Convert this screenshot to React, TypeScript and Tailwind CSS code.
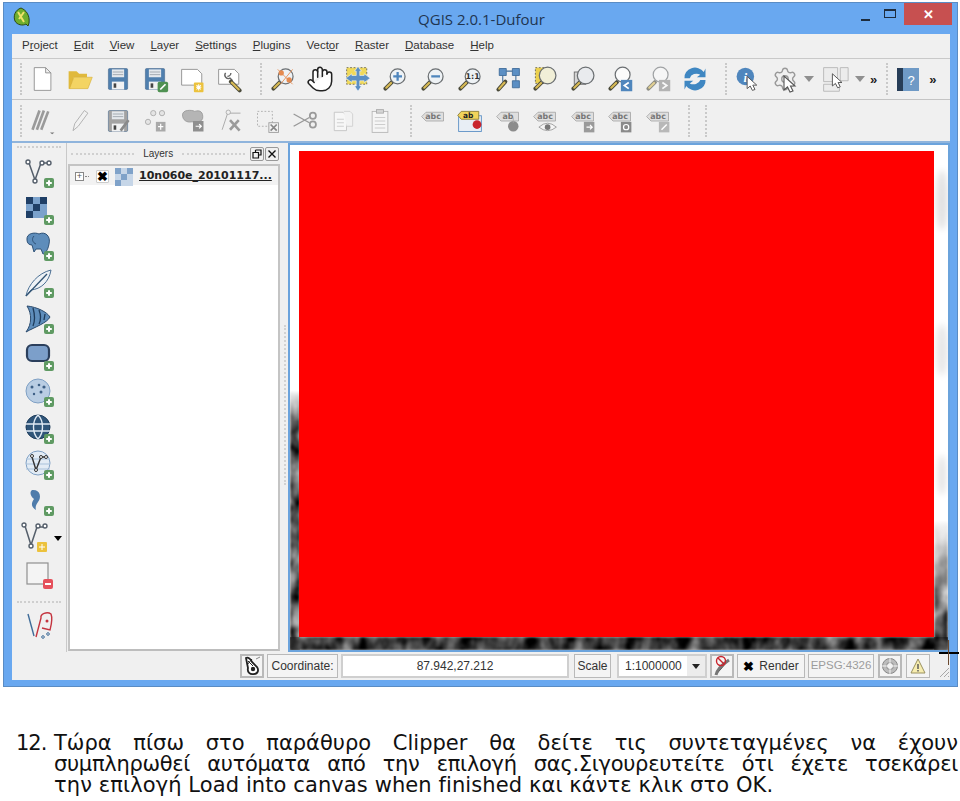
import React from 'react';
import { Hand, Settings } from 'lucide-react';

const Svg: React.FC<{ children: React.ReactNode; size?: number }> = ({ children, size = 32 }) => (
  <svg width={size} height={size} viewBox="0 0 32 32" fill="none">{children}</svg>
);

// little pieces shared by the toolbar icons
const Lens = ({ fill = '#eef2f5', cx = 19, cy = 13, r = 8.5 }: { fill?: string; cx?: number; cy?: number; r?: number }) => (
  <>
    <path d="M12.5 19.5 L5 27" stroke="#4a4a3a" strokeWidth="4.5" strokeLinecap="round" />
    <path d="M11.5 20.5 L6 26" stroke="#d9bb55" strokeWidth="2.4" strokeLinecap="round" />
    <circle cx={cx} cy={cy} r={r} fill={fill} stroke="#6b6f72" strokeWidth="1.4" />
  </>
);

const Cursor = ({ x = 0, y = 0 }: { x?: number; y?: number }) => (
  <path transform={`translate(${x} ${y})`} d="M0 0 L0 14 L3.5 11 L6 16 L9 15 L6.5 10 L11 10 Z" fill="#fff" stroke="#555" strokeWidth="1.1" />
);

const Plus = ({ x = 21, y = 21 }: { x?: number; y?: number }) => (
  <>
    <rect x={x} y={y} width="10" height="10" rx="2" fill="#5f9a63" />
    <path d={`M${x + 5} ${y + 2.2} V${y + 7.8} M${x + 2.2} ${y + 5} H${x + 7.8}`} stroke="#fff" strokeWidth="2" />
  </>
);

const Floppy = ({ color = '#4f7fae' }: { color?: string }) => (
  <>
    <rect x="5" y="4" width="22" height="24" rx="1.5" fill={color} stroke="#3b5f86" strokeWidth="0.6" />
    <rect x="9" y="5" width="14" height="9" fill="#e4e8ec" />
    <path d="M10 8 H22 M10 11 H22" stroke="#9aa2aa" />
    <rect x="9" y="19" width="14" height="9" fill="#f1f2f3" />
    <rect x="11" y="21" width="3" height="5" fill="#444" />
  </>
);

const Page = () => (
  <path d="M6 3 H19 L25 9 V29 H6 Z M19 3 V9 H25" fill="#fff" stroke="#8c8c8c" strokeWidth="1" />
);

const Label = ({ text = 'abc', fill = '#dfdfdf' }: { text?: string; fill?: string }) => (
  <>
    <path d="M8 6 H28 V16 H8 L3 11 Z" fill={fill} stroke="#a8a8a8" />
    <text x="16" y="14" fontSize="9" fontWeight="700" textAnchor="middle" fill="#777" fontFamily="DejaVu Sans">{text}</text>
  </>
);

const top1 = [
  <Svg key="new"><Page /></Svg>,
  <Svg key="open"><path d="M3 7 H12 L15 10 H24 V14 H9 L5 27 H3 Z" fill="#e0b93c" /><path d="M9 14 H30 L25 27 H4 Z" fill="#f3d463" stroke="#d6ae38" strokeWidth="0.7" /></Svg>,
  <Svg key="save"><Floppy /></Svg>,
  <Svg key="saveas"><Floppy /><rect x="19" y="19" width="12" height="12" rx="2" fill="#4f9152" /><path d="M22 28 L28 22" stroke="#fff" strokeWidth="2" /></Svg>,
  <Svg key="print"><path d="M3 5 H21 L26 10 V23 H3 Z" fill="#fff" stroke="#8c8c8c" /><rect x="17" y="20" width="11" height="11" rx="1" fill="#ecc23d" /><path d="M22.5 22 V29 M19.5 25.5 H25.5 M20 23 L25 28 M25 23 L20 28" stroke="#fff" strokeWidth="1.2" /></Svg>,
  <Svg key="manager"><path d="M3 5 H21 L26 10 V22 H3 Z" fill="#fff" stroke="#8c8c8c" /><path d="M11 9 A4 4 0 0 0 16 15 L19 18 M17 9 A4 4 0 0 1 13 13" stroke="#666" strokeWidth="1.6" /><path d="M17 19 L27 29" stroke="#4a4a3a" strokeWidth="4.5" strokeLinecap="round" /><path d="M18 20 L26 28" stroke="#d9bb55" strokeWidth="2.4" strokeLinecap="round" /></Svg>,
  <Svg key="panmap"><Lens /><path d="M10 5 L27 22 M27 5 L13 22" stroke="#e58a50" strokeWidth="1" /><circle cx="14" cy="9" r="3" fill="#e58a50" /><circle cx="23" cy="17" r="3" fill="#e58a50" /></Svg>,
  <Hand key="hand" size={28} strokeWidth={1.3} color="#222" fill="#fff" />,
  <Svg key="pansel"><path d="M3 3 H26 V22 H3 Z" fill="#f0d95a" stroke="#444" strokeDasharray="2 2" strokeWidth="0.8" /><path d="M16 2 L20 7 H18 V12 H23 V10 L30 15 L23 20 V18 H18 V24 H20 L16 30 L12 24 H14 V18 H9 V20 L2 15 L9 10 V12 H14 V7 H12 Z" fill="#5b8fc4" stroke="#fff" strokeWidth="0.6" /></Svg>,
  <Svg key="zin"><Lens /><path d="M19 8 V18 M14 13 H24" stroke="#4f86bd" strokeWidth="2.6" /></Svg>,
  <Svg key="zout"><Lens /><path d="M14 13 H24" stroke="#4f86bd" strokeWidth="2.6" /></Svg>,
  <Svg key="z11"><Lens /><text x="19" y="16.5" fontSize="9" fontWeight="700" textAnchor="middle" fill="#333" fontFamily="DejaVu Sans">1:1</text></Svg>,
  <Svg key="zfull"><path d="M6 4 H14 V12 H6 Z M21 4 H29 V12 H21 Z M21 18 H29 V26 H21 Z" fill="#5b8fc4" stroke="#3f6c99" /><path d="M14 7 H21 M25 12 V18 M10 12 V19" stroke="#3f6c99" strokeWidth="1.2" /><path d="M13 19 L5 28" stroke="#4a4a3a" strokeWidth="4.5" strokeLinecap="round" /><path d="M12 20 L6 27" stroke="#d9bb55" strokeWidth="2.4" strokeLinecap="round" /></Svg>,
  <Svg key="zsel"><rect x="5" y="3" width="14" height="18" fill="#ecd14e" stroke="#444" strokeDasharray="2 2" strokeWidth="0.8" /><Lens fill="#f1efd7" r={9.5} cy={12} /></Svg>,
  <Svg key="zlayer"><rect x="6" y="8" width="13" height="14" fill="#d5d5d5" stroke="#666" /><Lens fill="#e9ebee" r={9.5} cy={12} /></Svg>,
  <Svg key="zlast"><Lens fill="#fbfbfb" r={8.5} cy={11} /><rect x="17" y="17" width="13" height="13" fill="#4f86bd" /><path d="M26 20 L21 23.5 L26 27" stroke="#fff" strokeWidth="2" /></Svg>,
  <Svg key="znext"><g opacity="0.6"><Lens fill="#fbfbfb" r={8.5} cy={11} /><rect x="17" y="17" width="13" height="13" fill="#8c8c8c" /><path d="M21 20 L26 23.5 L21 27" stroke="#fff" strokeWidth="2" /></g></Svg>,
  <Svg key="refresh"><path d="M4 15 A12 11 0 0 1 26 8 L28 4 V14 H18 L22 11 A8 7 0 0 0 10 15 Z" fill="#3f87c2" /><path d="M28 17 A12 11 0 0 1 6 24 L4 28 V18 H14 L10 21 A8 7 0 0 0 22 17 Z" fill="#3f87c2" /></Svg>,
];

const top2 = [
  <Svg key="edits"><g stroke="#9a9a9a" strokeWidth="3"><path d="M4 26 L12 4 M9 26 L17 4 M14 26 L22 5" /></g><path d="M24 29 H29 L26.5 31 Z" fill="#777" /></Svg>,
  <Svg key="pencil"><path d="M8 27 L10 19 L21 4 L25 7 L14 22 Z" fill="#f1f1f1" stroke="#aaa" /></Svg>,
  <Svg key="savee"><Floppy color="#a3a3a3" /><path d="M19 27 L28 15" stroke="#8a8a8a" strokeWidth="3" /></Svg>,
  <Svg key="dots"><g stroke="#aaa" fill="#e4e4e4"><circle cx="14" cy="7" r="3" /><circle cx="24" cy="7" r="3" /><circle cx="8" cy="17" r="3" /></g><rect x="17" y="17" width="11" height="11" fill="#a9a9a9" /><path d="M22.5 19 V26 M19.5 22.5 H25.5" stroke="#fff" strokeWidth="1.4" /></Svg>,
  <Svg key="blob"><path d="M4 9 C4 3 14 3 18 5 C24 3 28 6 27 13 C26 18 17 17 14 17 C9 18 4 15 4 9 Z" fill="#b5b5b5" stroke="#9a9a9a" /><rect x="16" y="16" width="12" height="12" fill="#8f8f8f" /><path d="M19 22 H25 M23 19.5 L25.5 22 L23 24.5" stroke="#fff" strokeWidth="1.4" /></Svg>,
  <Svg key="tools"><circle cx="14" cy="6" r="2.5" stroke="#aaa" /><path d="M13 8 L7 26 M16 7 H28" stroke="#aaa" strokeWidth="1.1" /><path d="M16 15 L27 27 M26 15 L16 26" stroke="#9a9a9a" strokeWidth="3" /></Svg>,
  <Svg key="selx"><rect x="4" y="5" width="17" height="17" fill="#f0f0f0" stroke="#aaa" strokeDasharray="2 2" /><rect x="17" y="18" width="11" height="11" fill="#f3f3f3" stroke="#999" /><path d="M19 20 L26 27 M26 20 L19 27" stroke="#888" strokeWidth="2" /></Svg>,
  <Svg key="cut"><path d="M3 8 L21 18 M3 22 L21 12" stroke="#999" strokeWidth="1.6" /><circle cx="25" cy="10" r="3.5" stroke="#999" strokeWidth="2" /><circle cx="25" cy="20" r="3.5" stroke="#999" strokeWidth="2" /></Svg>,
  <Svg key="copy"><path d="M6 6 H16 L20 10 V27 H6 Z" fill="#f7f7f7" stroke="#c2c2c2" /><path d="M17 5 H24 L27 8 V22 H20" fill="#f2f2f2" stroke="#cfcfcf" /><path d="M9 14 H17 M9 18 H17 M9 22 H17" stroke="#ccc" /></Svg>,
  <Svg key="paste"><rect x="7" y="5" width="18" height="24" fill="#f5f5f5" stroke="#b5b5b5" /><rect x="12" y="3" width="8" height="4" fill="#d5d5d5" stroke="#aaa" /><path d="M10 12 H22 M10 16 H22 M10 20 H22 M10 24 H22" stroke="#c7c7c7" /></Svg>,
];

const top2b = [
  <Svg key="abc1"><Label /></Svg>,
  <Svg key="abc2"><rect x="3" y="10" width="26" height="18" fill="#e8eef5" stroke="#5b8fc4" /><path d="M6 5 H26 V14 H6 L2 9.5 Z" fill="#f2d45a" stroke="#8a7a30" /><text x="14" y="12.5" fontSize="8.5" fontWeight="700" textAnchor="middle" fill="#222" fontFamily="DejaVu Sans">ab</text><circle cx="24" cy="20" r="5" fill="#c9252d" /></Svg>,
  <Svg key="abc3"><Label text="ab" /><circle cx="22" cy="22" r="6" fill="#8c8c8c" /><path d="M22 12 V18" stroke="#aaa" /></Svg>,
  <Svg key="abc4"><Label /><path d="M9 23 Q19 14 29 23 Q19 31 9 23 Z" fill="#f5f5f5" stroke="#999" /><circle cx="19" cy="23" r="3.2" fill="#777" /></Svg>,
  <Svg key="abc5"><Label /><rect x="17" y="17" width="12" height="12" fill="#9a9a9a" /><path d="M20 23 H26 M24 20.5 L26.5 23 L24 25.5" stroke="#fff" strokeWidth="1.4" /></Svg>,
  <Svg key="abc6"><Label /><rect x="17" y="17" width="12" height="12" fill="#8a8a8a" /><circle cx="23" cy="23" r="3" stroke="#fff" strokeWidth="1.4" /></Svg>,
  <Svg key="abc7"><Label /><rect x="17" y="17" width="12" height="12" fill="#b8b8b8" /><path d="M20 26 L26 20" stroke="#fff" strokeWidth="1.6" /></Svg>,
];

const side = [
  <Svg key="v"><g stroke="#555f6b" strokeWidth="1.5"><path d="M6 6 L12 23 L18 6 H25" /></g><g fill="#fff" stroke="#555f6b" strokeWidth="1.4"><circle cx="5" cy="5" r="2" /><circle cx="12" cy="24" r="2" /><circle cx="19" cy="6" r="2" /><circle cx="26" cy="6" r="2" /></g><Plus /></Svg>,
  <Svg key="r"><rect x="3" y="3" width="21" height="21" fill="#7ba2cc" /><path d="M3 3 H10 V10 H3 Z M17 3 H24 V10 H17 Z M10 10 H17 V17 H10 Z M3 17 H10 V24 H3 Z" fill="#1f3f66" /><Plus /></Svg>,
  <Svg key="pg"><path d="M4 10 C3 3 12 2 16 4 C22 1 28 6 26 14 C25 20 22 24 20 24 L18 19 L13 19 L11 22 L9 15 C6 15 4 13 4 10 Z" fill="#5e8dbb" stroke="#2f5277" /><path d="M11 6 C8 9 10 13 13 14" stroke="#2f5277" /><Plus /></Svg>,
  <Svg key="sl"><path d="M3 29 C5 18 15 6 28 3 C26 15 18 22 8 23 Z" fill="#eef2f6" stroke="#4b6f93" /><path d="M3 29 L24 7" stroke="#315374" strokeWidth="1.3" /><Plus /></Svg>,
  <Svg key="ms"><path d="M4 3 C14 4 24 9 27 14 C24 20 12 24 3 29 C9 21 9 11 4 3 Z" fill="#5e8dbb" stroke="#2b4a6c" /><path d="M10 5 C12 12 12 18 10 23 M16 7 C18 12 18 17 16 21 M22 11 L21 17" stroke="#1e3b5b" strokeWidth="1.3" /><Plus /></Svg>,
  <Svg key="ora"><rect x="4" y="5" width="22" height="16" rx="5" fill="#7c9fca" stroke="#2b3f5c" strokeWidth="2.2" /><Plus /></Svg>,
  <Svg key="wms1"><circle cx="15" cy="15" r="12" fill="#b9cde3" stroke="#7fa0c4" /><g fill="#3d5f85"><circle cx="9" cy="11" r="1.5" /><circle cx="16" cy="9" r="1.3" /><circle cx="21" cy="11" r="1.6" /><circle cx="11" cy="18" r="1.2" /><circle cx="18" cy="16" r="1.5" /></g><Plus /></Svg>,
  <Svg key="wms2"><circle cx="15" cy="14" r="12" fill="#2f5579" stroke="#1d3b5a" /><path d="M3 11 H27 M3 18 H27 M15 2 C9 8 9 20 15 26 C21 20 21 8 15 2" stroke="#dfe9f3" strokeWidth="1.4" /><Plus /></Svg>,
  <Svg key="wfs"><circle cx="15" cy="14" r="12" fill="#e3ecf5" stroke="#7fa0c4" /><path d="M3 10 H27 M3 15 H27 M3 20 H27" stroke="#a9c2db" /><path d="M9 8 L13 21 L18 8 H23" stroke="#333" strokeWidth="1.4" /><g fill="#fff" stroke="#333"><circle cx="9" cy="7" r="1.5" /><circle cx="13" cy="21" r="1.5" /><circle cx="18" cy="8" r="1.5" /><circle cx="23" cy="8" r="1.5" /></g><Plus /></Svg>,
  <Svg key="line"><path d="M9 4 C17 3 19 11 15 16 C13 19 12 21 13 24 C8 21 8 17 11 13 C8 11 6 6 9 4 Z" fill="#4f7cab" /><Plus y={20} /></Svg>,
];

const Gripper: React.FC = () => (
  <div className="w-[4px] h-[32px] border-l-2 border-dotted border-[#c9c9c9] shrink-0" />
);

const Slot: React.FC<{ children: React.ReactNode }> = ({ children }) => (
  <div className="w-[37.5px] h-[32px] flex items-center justify-center shrink-0 [&>svg]:w-[28px] [&>svg]:h-[28px]">{children}</div>
);

const Gap: React.FC<{ className: string }> = ({ className }) => <div className={`shrink-0 ${className}`} />;

const Chev: React.FC = () => <span className="text-[13px] font-bold text-[#222] leading-none">»</span>;

const Arrow: React.FC = () => <div className="w-0 h-0 border-x-[5px] border-t-[6px] border-x-transparent border-t-[#8f8f8f] shrink-0" />;

const StatusBox: React.FC<{ children: React.ReactNode; className: string }> = ({ children, className }) => (
  <div className={`h-[24px] border border-[#b9b9b9] bg-[#f4f4f4] flex items-center justify-center text-[12px] text-[#333] shrink-0 ${className}`}>
    {children}
  </div>
);

const U: React.FC<{ children: React.ReactNode }> = ({ children }) => <span className="underline">{children}</span>;

const MapCanvas: React.FC = () => (
  <svg className="absolute inset-0 w-full h-full" viewBox="0 0 658 505" preserveAspectRatio="none">
    <defs>
      <filter id="noise" x="0" y="0" width="100%" height="100%" colorInterpolationFilters="sRGB">
        <feTurbulence type="fractalNoise" baseFrequency="0.06 0.04" numOctaves="3" seed="4" />
        <feColorMatrix type="matrix" values="1.5 0 0 0 -0.45  1.5 0 0 0 -0.45  1.5 0 0 0 -0.45  0 0 0 0 1" />
        <feGaussianBlur stdDeviation="0.8" />
      </filter>
      <linearGradient id="fadeIn" x1="0" y1="0" x2="0" y2="1">
        <stop offset="0" stopColor="#fff" stopOpacity="0" />
        <stop offset="0.12" stopColor="#fff" stopOpacity="1" />
        <stop offset="1" stopColor="#fff" stopOpacity="1" />
      </linearGradient>
      <linearGradient id="fadeRight" x1="0" y1="0" x2="0" y2="1">
        <stop offset="0" stopColor="#fff" stopOpacity="0" />
        <stop offset="0.5" stopColor="#fff" stopOpacity="0.7" />
        <stop offset="1" stopColor="#fff" stopOpacity="1" />
      </linearGradient>
      <mask id="leftMask"><rect x="0" y="245" width="10" height="260" fill="url(#fadeIn)" /></mask>
      <mask id="rightMask"><rect x="644" y="375" width="14" height="130" fill="url(#fadeRight)" /></mask>
      <filter id="soft"><feGaussianBlur stdDeviation="3" /></filter>
    </defs>
    <rect x="0" y="245" width="10" height="260" filter="url(#noise)" mask="url(#leftMask)" />
    <rect x="644" y="375" width="14" height="130" filter="url(#noise)" mask="url(#rightMask)" />
    <rect x="0" y="492" width="658" height="13" filter="url(#noise)" />
    <rect x="0" y="492" width="658" height="13" fill="#000" opacity="0.25" />
    <g filter="url(#soft)" fill="#e2e2e2">
      <ellipse cx="652" cy="55" rx="6" ry="30" />
      <ellipse cx="652" cy="205" rx="6" ry="26" opacity="0.8" />
      <ellipse cx="652" cy="330" rx="4" ry="20" />
    </g>
  </svg>
);

export default function App() {
  return (
    <div className="w-[960px] h-[801px] bg-white overflow-hidden font-['Liberation_Sans',sans-serif]">
      <div className="relative mt-[2px] ml-[3px] w-[955px] h-[685px] bg-[#69a8f0] border border-[#5a8cc4] flex flex-col">
        {/* title bar */}
        <div className="h-[31px] shrink-0 flex items-center relative">
          <svg className="ml-[8px] mt-[-4px]" width="18" height="20" viewBox="0 0 18 20">
            <path d="M9 1 C3 3 1 9 3 14 C5 18 11 19 14 17 L16 19 L17 16 C18 8 14 3 9 1 Z" fill="#6fae2e" stroke="#2d4a10" />
            <path d="M6 5 L12 15 M12 5 L7 12" stroke="#f0e26a" strokeWidth="2" />
          </svg>
          <div className="absolute inset-x-0 top-[6px] text-center text-[15px] leading-[20px] text-[#1f3550] font-['Open_Sans',sans-serif] pl-[2px]">QGIS 2.0.1-Dufour</div>
          <div className="flex items-start self-start ml-auto mr-[5px]">
            <div className="w-[9px] h-[2px] bg-[#1d2c3e] mt-[16px] mr-[14px]" />
            <div className="w-[12px] h-[9px] border border-t-2 border-[#1d2c3e] mt-[6px] mr-[8px]" />
            <div className="w-[48px] h-[22px] bg-[#c75050] flex items-center justify-center text-white text-[13px] font-bold leading-none">✕</div>
          </div>
        </div>

        <div className="ml-[8px] mr-[7px] h-[646px] bg-[#f0f0f0] flex flex-col min-h-0">
          {/* menu */}
          <div className="h-[25px] shrink-0 flex items-center gap-4 pl-[10px] text-[11.5px] text-[#333] border-b border-[#c9c9c9]">
            <span>P<U>r</U>oject</span>
            <span><U>E</U>dit</span>
            <span><U>V</U>iew</span>
            <span><U>L</U>ayer</span>
            <span><U>S</U>ettings</span>
            <span><U>P</U>lugins</span>
            <span>Vect<U>o</U>r</span>
            <span><U>R</U>aster</span>
            <span><U>D</U>atabase</span>
            <span><U>H</U>elp</span>
          </div>

          {/* toolbars */}
          <div className="h-[41px] shrink-0 flex items-center border-b border-[#c4c4c4]">
            <Gap className="w-[8px]" /><Gripper />
            {top1.slice(0, 6).map((icon, i) => <Slot key={i}>{icon}</Slot>)}
            <Gap className="w-[11px]" /><Gripper />
            {top1.slice(6).map((icon, i) => <Slot key={i}>{icon}</Slot>)}
            <Gap className="w-[11px]" /><Gripper />
            <Slot><svg width="28" height="28" viewBox="0 0 32 32"><circle cx="13" cy="13" r="10" fill="#4f86bd" /><text x="13" y="19" fontSize="15" fontWeight="700" fontStyle="italic" fill="#fff" textAnchor="middle" fontFamily="Liberation Serif">i</text><Cursor x={15} y={13} /></svg></Slot>
            <Gap className="w-[4.5px]" />
            <div className="relative w-[28px] h-[32px] shrink-0 flex items-center justify-center">
              <Settings size={26} strokeWidth={1.3} color="#9a9a9a" />
              <svg className="absolute left-[12px] top-[12px]" width="18" height="20" viewBox="0 0 18 20"><Cursor x={1} y={1} /></svg>
            </div>
            <Gap className="w-[5px]" /><Arrow /><Gap className="w-[2px]" />
            <Slot><svg width="28" height="28" viewBox="0 0 32 32"><path d="M3 3 H19 V19 H3 Z M22 3 H31 V18 H22 Z M3 22 H21 V30 H3 Z" fill="#ececec" stroke="#b5b5b5" /><Cursor x={13} y={10} /></svg></Slot>
            <Gap className="w-[1.5px]" /><Arrow />
            <Gap className="w-[5px]" /><Chev />
            <Gap className="w-[9px]" /><Gripper />
            <Gap className="w-[5px]" />
            <svg className="shrink-0" width="26" height="28" viewBox="0 0 26 28"><rect x="2" y="3" width="22" height="23" fill="#6f9ac6" /><rect x="2" y="3" width="6" height="23" fill="#273d57" /><text x="16" y="20" fontSize="13" fill="#fff" textAnchor="middle" fontFamily="Liberation Sans">?</text></svg>
            <Gap className="w-[8px]" /><Chev />
          </div>
          <div className="h-[43px] shrink-0 flex items-center border-b-2 border-[#8fb4dc]">
            <Gap className="w-[8px]" /><Gripper />
            {top2.map((icon, i) => <Slot key={i}>{icon}</Slot>)}
            <Gap className="w-[11px]" /><Gripper />
            {top2b.map((icon, i) => <Slot key={i}>{icon}</Slot>)}
            <Gap className="w-[11px]" /><Gripper />
            <Gap className="w-[13px]" /><Gripper />
          </div>

          {/* main area */}
          <div className="flex-1 min-h-0 flex">
            <div className="w-[55px] shrink-0 flex flex-col items-center border-r border-[#c9c9c9] pt-[3px]">
              <div className="w-[44px] h-[4px] border-t-2 border-dotted border-[#cfcfcf] shrink-0" />
              <div className="h-[5px] shrink-0" />
              {side.map((icon, i) => (
                <div key={i} className="h-[36.5px] w-[32px] ml-[-1px] flex items-center justify-center shrink-0">{icon}</div>
              ))}
              <div className="h-[36.5px] w-[50px] flex items-center pl-[7px] gap-[4px] shrink-0">
                <Svg><g stroke="#555f6b" strokeWidth="1.5"><path d="M4 4 L10 23 L16 5 H23" /></g><g fill="#fff" stroke="#555f6b" strokeWidth="1.4"><circle cx="3" cy="3" r="2" /><circle cx="10" cy="24" r="2" /><circle cx="17" cy="4" r="2" /><circle cx="24" cy="4" r="2" /></g><rect x="16" y="20" width="10" height="10" rx="1" fill="#ecc23d" /><path d="M21 22 V28 M18 25 H24" stroke="#fff" /></Svg>
                <div className="w-0 h-0 border-x-[4.5px] border-t-[5px] border-x-transparent border-t-black ml-[-3px]" />
              </div>
              <div className="h-[37px] w-[32px] flex items-center justify-center shrink-0">
                <Svg><rect x="4" y="4" width="21" height="21" fill="#f4f4f4" stroke="#8f8f8f" strokeWidth="1.2" /><rect x="20" y="20" width="10" height="10" rx="2" fill="#e5505b" /><path d="M22 25 H28" stroke="#fff" strokeWidth="2" /></Svg>
              </div>
              <div className="w-[44px] h-[4px] border-t-2 border-dotted border-[#cfcfcf] shrink-0 mt-[7px]" />
              <div className="h-[36px] w-[32px] flex items-center justify-center shrink-0 mt-[3px]">
                <Svg><path d="M5 4 L11 26" stroke="#3f6c99" strokeWidth="1.4" /><path d="M13 27 L18 8 C17 4 24 1 28 4 C30 9 28 16 27 20 L19 18" stroke="#c4343f" strokeWidth="1.4" /><circle cx="24" cy="11" r="1.5" fill="#c4343f" /><circle cx="20" cy="27" r="1.3" stroke="#3f6c99" /><circle cx="25" cy="24" r="1.3" stroke="#3f6c99" /></Svg>
              </div>
            </div>

            {/* layers dock */}
            <div className="w-[214px] shrink-0 flex flex-col pb-[1px]">
              <div className="h-[21px] shrink-0 flex items-center pl-[4px] pr-[2px]">
                <div className="w-[64px] border-t-2 border-dotted border-[#d0d0d0]" />
                <span className="text-[10px] text-[#333] mx-[9px]">Layers</span>
                <div className="w-[64px] border-t-2 border-dotted border-[#d0d0d0]" />
                <div className="ml-[5px] w-[14px] h-[14px] border border-[#999] rounded-[2px] flex items-center justify-center">
                  <svg width="10" height="10" viewBox="0 0 10 10"><path d="M3.5 1 H9 V6 H7 M1 3.5 H6.5 V9 H1 Z M3.5 1 V3.5" stroke="#111" strokeWidth="1.2" fill="none" /></svg>
                </div>
                <div className="ml-[1px] w-[14px] h-[14px] border border-[#999] rounded-[2px] flex items-center justify-center">
                  <svg width="10" height="10" viewBox="0 0 10 10"><path d="M1.5 1.5 L8.5 8.5 M8.5 1.5 L1.5 8.5" stroke="#111" strokeWidth="1.4" /></svg>
                </div>
              </div>
              <div className="flex-1 ml-[1px] mr-[1px] bg-white border-2 border-[#c4c4c4] border-b-[#bdbdbd]">
                <div className="h-[19px] pt-[2px] bg-[#f2f2f2] flex items-center pl-[5px]">
                  <div className="w-[9px] h-[9px] border border-[#888] bg-white flex items-center justify-center text-[9px] leading-none text-[#555]">+</div>
                  <div className="w-[4px] border-t border-dotted border-[#888] ml-[1px]" />
                  <div className="ml-[7px] w-[13px] h-[13px] border border-[#ccc] bg-white rounded-[1px] flex items-center justify-center text-[13px] font-bold leading-none text-black">✖</div>
                  <svg className="ml-[6px]" width="18" height="18" viewBox="0 0 18 18"><rect width="18" height="18" fill="#c6d6e8" /><path d="M0 0 H6 V6 H0 Z M12 0 H18 V6 H12 Z M6 6 H12 V12 H6 Z M0 12 H6 V18 H0 Z" fill="#7fa2c9" /></svg>
                  <span className="ml-[6px] font-['DejaVu_Sans',sans-serif] font-bold text-[11px] underline text-[#222] whitespace-nowrap">10n060e_20101117...</span>
                </div>
              </div>
            </div>

            {/* splitter */}
            <div className="w-[7px] shrink-0 flex items-center justify-center">
              <div className="h-[160px] border-l-2 border-dotted border-[#d2d2d2] mt-[15px]" />
            </div>

            {/* map canvas */}
            <div className="relative flex-1 bg-white border-2 border-[#6ba3dc] pl-[9px] pr-[14px] pt-[6px] pb-[13px] flex">
              <MapCanvas />
              <div className="relative flex-1 bg-[#ff0000]" />
            </div>
          </div>

          {/* status bar */}
          <div className="h-[28px] shrink-0 flex items-center pl-[228px] gap-[3px]">
            <StatusBox className="w-[24px] border-2"><svg width="18" height="20" viewBox="0 0 18 20"><path d="M3 2 C5 1 8 3 9 6 L14 11 C16 14 15 18 11 18 C7 19 4 16 5 12 Z" fill="#fff" stroke="#222" strokeWidth="1.8" /><circle cx="10" cy="13" r="2.2" fill="#222" /><path d="M5 5 L10 10 M9 3 L4 9" stroke="#222" /><path d="M13 3 L17 1" stroke="#888" /></svg></StatusBox>
            <StatusBox className="w-[71px]">Coordinate:</StatusBox>
            <div className="h-[24px] w-[228px] shrink-0 border-2 border-[#cfcfcf] bg-white flex items-center justify-center text-[12px] text-[#333]">87.942,27.212</div>
            <StatusBox className="w-[37px] ml-[2px]">Scale</StatusBox>
            <div className="h-[24px] w-[90px] ml-[3px] shrink-0 border-2 border-[#cfcfcf] bg-white flex items-center text-[12px] text-[#333] pl-[6px]">
              <span className="flex-1">1:1000000</span>
              <div className="w-[18px] h-full bg-[#ececec] flex items-center justify-center">
                <div className="w-0 h-0 border-x-[4px] border-t-[5px] border-x-transparent border-t-[#222]" />
              </div>
            </div>
            <StatusBox className="w-[24px] border-2">
              <svg width="18" height="22" viewBox="0 0 18 22"><path d="M3 20 C4 15 10 9 16 5" stroke="#777" strokeWidth="3" /><circle cx="8" cy="6" r="4.5" stroke="#c9252d" strokeWidth="1.4" fill="none" /><path d="M5 3 L11 9" stroke="#c9252d" strokeWidth="1.4" /></svg>
            </StatusBox>
            <StatusBox className="w-[68px] gap-[5px]"><span className="text-[13px] font-bold leading-none text-black">✖</span>Render</StatusBox>
            <StatusBox className="w-[66px]"><span className="text-[#9c9c9c] text-[11.5px]">EPSG:4326</span></StatusBox>
            <StatusBox className="w-[24px] border-2 ml-[1px]">
              <svg width="18" height="18" viewBox="0 0 18 18"><circle cx="9" cy="9" r="7.5" fill="#bcbcbc" stroke="#888" /><circle cx="9" cy="9" r="3.5" fill="#f0f0f0" stroke="#888" /><path d="M9 0 V18 M0 9 H18" stroke="#f4f4f4" strokeWidth="1" /></svg>
            </StatusBox>
            <StatusBox className="w-[24px] ml-[1px]">
              <svg width="16" height="16" viewBox="0 0 16 16"><path d="M8 1 L15 15 H1 Z" fill="#f7edb0" stroke="#9a9160" /><path d="M8 6 V11 M8 12 V13.5" stroke="#555" strokeWidth="1.4" /></svg>
            </StatusBox>
            <svg className="ml-auto mt-[12px]" width="12" height="12" viewBox="0 0 12 12"><path d="M2 11 L11 2 M6 11 L11 6 M10 11 L11 10" stroke="#a8a8a8" /></svg>
          </div>
        </div>

        {/* crosshair cursor over the canvas corner */}
        <div className="absolute left-[935px] top-[649px] w-[20px] h-[2px] bg-black" />
        <div className="absolute left-[944px] top-[637px] w-px h-[25px] bg-[#6b4a30]" />
      </div>

      {/* instruction text */}
      <div className="mt-[46px] flex pl-[16px] pr-[2px] text-[21px] leading-[21px] text-[#111] font-['DejaVu_Sans',sans-serif]">
        <div className="w-[38px] shrink-0 tracking-[-1px]">12.</div>
        <div className="flex-1 min-w-0">
          <div className="[text-align-last:justify]">Τώρα πίσω στο παράθυρο Clipper θα δείτε τις συντεταγμένες να έχουν</div>
          <div className="[text-align-last:justify] tracking-[-0.3px]">συμπληρωθεί αυτόματα από την επιλογή σας.Σιγουρευτείτε ότι έχετε τσεκάρει</div>
          <div className="whitespace-nowrap tracking-[0.1px]">την επιλογή Load into canvas when finished και κάντε κλικ στο OK.</div>
        </div>
      </div>
    </div>
  );
}
